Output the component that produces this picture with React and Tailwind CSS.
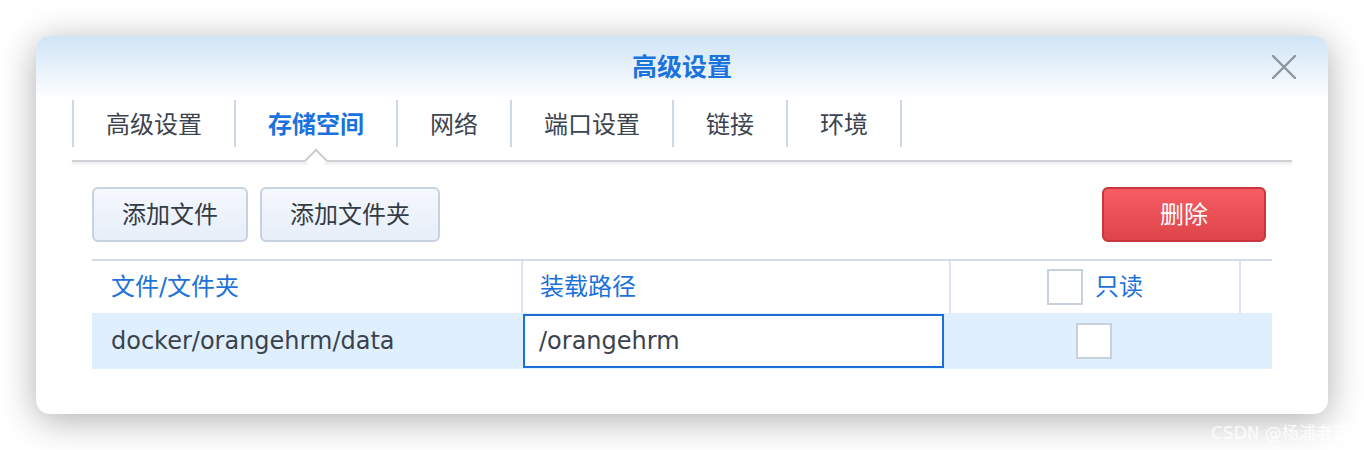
import React from 'react';

const tabs = ['高级设置', '存储空间', '网络', '端口设置', '链接', '环境'];

function CloseIcon() {
  return (
    <svg width="26" height="24" viewBox="0 0 26 24" fill="none">
      <path d="M2 1 L24 23 M24 1 L2 23" stroke="#8b949d" strokeWidth="2.4" strokeLinecap="round" />
    </svg>
  );
}

function Checkbox() {
  return <div className="w-[36px] h-[36px] border-2 border-[#c6d1dd] bg-white shrink-0" />;
}

export default function App() {
  return (
    <div
      className="relative w-[1364px] h-[450px] bg-white overflow-hidden"
      style={{ fontFamily: '"DejaVu Sans", "Noto Sans CJK SC", sans-serif' }}
    >
      <div className="absolute left-[36px] top-[36px] w-[1292px] h-[378px] rounded-[14px] bg-white shadow-[0_6px_36px_rgba(0,0,0,0.32)] overflow-hidden">
        {/* title bar */}
        <div className="relative h-[64px] bg-gradient-to-b from-[#d0e4f6] to-white flex items-center justify-center">
          <span className="text-[25px] font-bold text-[#1b73de]">高级设置</span>
          <button className="absolute right-[31px] top-[19px]">
            <CloseIcon />
          </button>
        </div>

        {/* tabs */}
        <div className="px-[36px]">
          <div className="flex h-[47px]">
            {tabs.map((t, i) => (
              <div
                key={t}
                className={
                  'relative flex items-center pt-[2px] px-[32px] border-l-2 border-[#ccd8e6] text-[24px] ' +
                  (i === tabs.length - 1 ? 'border-r-2 ' : '') +
                  (i === 1 ? 'text-[#1a72de] font-bold' : 'text-[#3c4450]')
                }
              >
                {t}
                {i === 1 && (
                  <div className="absolute left-1/2 -translate-x-1/2 top-[52px] w-[17px] h-[17px] rotate-45 border-l-2 border-t-2 border-[#c9cdd2] bg-white z-10" />
                )}
              </div>
            ))}
          </div>
          <div className="mt-[13px] h-[2px] bg-[#cdd1d5] shadow-[0_2px_3px_rgba(0,0,0,0.12)]" />
        </div>

        {/* content */}
        <div className="px-[56px] pt-[25px]">
          <div className="flex items-center h-[55px]">
            <button className="h-[55px] px-[28px] rounded-[6px] border-2 border-[#c8d2de] bg-gradient-to-b from-[#f5f8fd] to-[#e7eef9] text-[24px] text-[#343c46]">
              添加文件
            </button>
            <button className="ml-[12px] h-[55px] px-[28px] rounded-[6px] border-2 border-[#c8d2de] bg-gradient-to-b from-[#f5f8fd] to-[#e7eef9] text-[24px] text-[#343c46]">
              添加文件夹
            </button>
            <button className="ml-auto mr-[6px] w-[164px] h-[55px] rounded-[6px] border-2 border-[#c9383e] bg-gradient-to-b from-[#f65c62] to-[#de454b] text-[24px] text-white">
              删除
            </button>
          </div>

          {/* table */}
          <div className="mt-[17px] border-t-2 border-[#d2dce8]">
            <div className="grid grid-cols-[429px_428px_290px_1fr] h-[52px] text-[24px] text-[#1c72da]">
              <div className="flex items-center pl-[19px]">文件/文件夹</div>
              <div className="flex items-center pl-[17px] border-l-2 border-[#dce5ef]">装载路径</div>
              <div className="flex items-center justify-center gap-[12px] border-l-2 border-[#dce5ef]">
                <Checkbox />
                <span>只读</span>
              </div>
              <div className="border-l-2 border-[#dce5ef]" />
            </div>
            <div className="grid grid-cols-[429px_428px_290px_1fr] h-[56px] bg-[#e0effd] text-[24px] text-[#3a424d]">
              <div className="flex items-center pl-[19px]">docker/orangehrm/data</div>
              <div className="flex items-center pl-[2px] pr-[5px] py-[1px]">
                <div className="w-full h-full border-2 border-[#1a6fd8] bg-white flex items-center pl-[14px]">
                  /orangehrm
                </div>
              </div>
              <div className="flex items-center justify-center">
                <Checkbox />
              </div>
              <div />
            </div>
          </div>
        </div>
      </div>

      <div className="absolute left-[1211px] top-[421px] text-[17px] text-white/80 whitespace-nowrap">
        CSDN @杨浦老苏
      </div>
    </div>
  );
}
